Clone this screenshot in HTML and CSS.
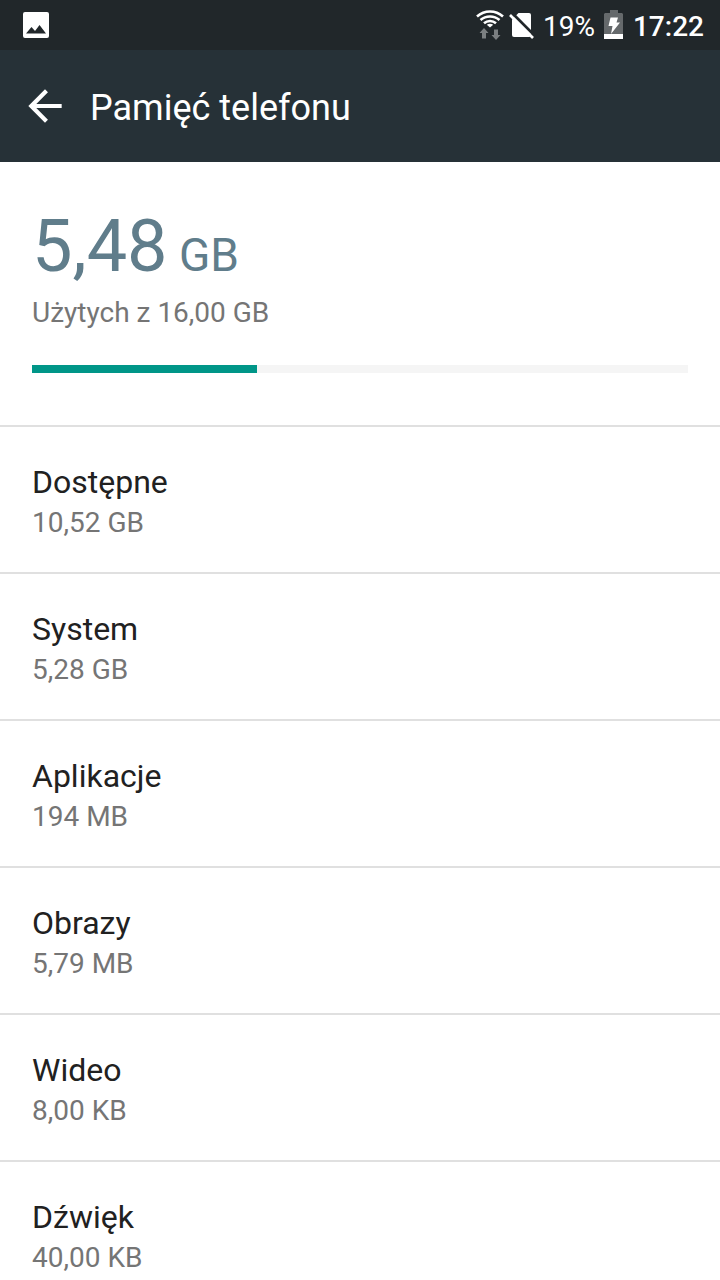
FILE: index.html
```
<!DOCTYPE html>
<html lang="pl">
<head>
	<meta charset="utf-8">
	<meta name="viewport" content="width=device-width, initial-scale=1">
	<title>Pamięć telefonu</title>
	<link rel="stylesheet" href="styles.css">
</head>
<body>
<div class="status-bar">
	<svg class="icon-picture" width="26" height="26" viewBox="0 0 26 26">
		<path fill="#fff" fill-rule="evenodd" d="M2 0h22a2 2 0 0 1 2 2v22a2 2 0 0 1-2 2H2a2 2 0 0 1-2-2V2a2 2 0 0 1 2-2zM3 21.500h20l-6.500-8.500-4.500 6-3.500-4z"/>
	</svg>
	<div class="status-right">
		<svg class="icon-wifi" width="28" height="30" viewBox="0 0 28 30">
			<g fill="none" stroke="#fff" stroke-width="2.600">
				<path d="M1 6.500c7.500-6.700 18.500-6.700 26 0"/>
				<path d="M4.500 10c5.500-4.700 13.500-4.700 19 0"/>
				<path d="M8 13.300c3.500-3 8.500-3 12 0"/>
			</g>
			<path fill="#fff" d="M14 17.500l-3.200-2.700q3.200-2 6.400 0z"/>
			<path fill="#7b7f81" d="M8 18l4.500 5H10v5.500H6V23H3.500zM20 30l-4.500-5H18v-5.500h4V25h2.500z"/>
		</svg>
		<svg class="icon-sim" width="26" height="30" viewBox="0 0 26 30">
			<path fill="#fff" d="M9.500 3H20a2 2 0 0 1 2 2v20a2 2 0 0 1-2 2H5a2 2 0 0 1-2-2V9.500z"/>
			<path stroke="#21272a" stroke-width="3" d="M3 3l24 24"/>
			<path stroke="#fff" stroke-width="2.600" d="M1 5l23 23"/>
		</svg>
		<span class="battery-level">19%</span>
		<svg class="icon-battery" width="20" height="30" viewBox="0 0 20 30">
			<path fill="#65696b" d="M6 0h8v3h4l1 1v20H0V4l1-1h5z"/>
			<path fill="#fff" d="M0 24h19v5H0zM6.500 7.500h7.500l-1.500 5h3.500l-9 11.500 1.500-8H4.500z"/>
		</svg>
		<span class="clock">17:22</span>
	</div>
</div>

<div class="header">
	<button class="back" type="button" aria-label="Wstecz">
		<svg width="50" height="50" viewBox="0 0 24 24">
			<path fill="#fff" d="M20 11H7.830l5.590-5.590L12 4l-8 8 8 8 1.410-1.410L7.830 13H20z"/>
		</svg>
	</button>
	<h1>Pamięć telefonu</h1>
</div>

<div class="content">
	<div class="summary">
		<p class="used">5,48<span class="unit"> GB</span></p>
		<label class="total" for="usage">Użytych z 16,00 GB</label>
		<progress class="usage" id="usage" value="5.48" max="16">5,48 GB</progress>
	</div>
	<ul class="storage-list">
		<li><h2>Dostępne</h2><p>10,52 GB</p></li>
		<li><h2>System</h2><p>5,28 GB</p></li>
		<li><h2>Aplikacje</h2><p>194 MB</p></li>
		<li><h2>Obrazy</h2><p>5,79 MB</p></li>
		<li><h2>Wideo</h2><p>8,00 KB</p></li>
		<li><h2>Dźwięk</h2><p>40,00 KB</p></li>
	</ul>
</div>
</body>
</html>
```
FILE: styles.css
```
body, p, ul, h1, h2 {
	margin: 0
}

ul {
	padding-left: 0;
	list-style: none
}

svg {
	display: block;
	flex: none;
}

body {
	display: flex;
	flex-direction: column;
	height: 100vh;
	background-color: #ffffff;
	color: #212121;
	font-family: Roboto, "Noto Sans", sans-serif;
}

.status-bar {
	flex: none;
	display: flex;
	align-items: center;
	justify-content: space-between;
	height: 50px;
	padding: 0 16px 0 23px;
	background-color: #21272a;
	color: #ffffff;
	font-size: 28px;
	line-height: 32px;
}

.status-right {
	display: flex;
	align-items: center;
}

.icon-sim {
	margin-left: 5px;
}

.battery-level {
	margin-left: 8px;
	padding-top: 4px;
}

.icon-battery {
	margin-left: 9px;
}

.clock {
	margin-left: 9px;
	padding-top: 4px;
	font-weight: 500;
}

.header {
	flex: none;
	display: flex;
	align-items: center;
	height: 112px;
	padding: 0 20px;
	background-color: #263137;
	color: #ffffff;
}

.header h1 {
	margin-left: 20px;
	padding-top: 4px;
	font-size: 36px;
	font-weight: 400;
	line-height: 44px;
}

.back {
	padding: 0;
	border: 0;
	background: none;
	cursor: pointer;
}

.content {
	flex: 1;
	min-height: 0;
	overflow-y: auto;
	scrollbar-width: none;
}

.summary {
	padding: 40px 32px 52px;
}

.used {
	margin-bottom: 2px;
	color: #607d8b;
	font-size: 72px;
	line-height: 90px;
}

.unit {
	font-size: 46px;
	line-height: 46px;
}

.total {
	display: block;
	color: #757575;
	font-size: 28px;
	line-height: 38px;
}

.usage {
	display: block;
	width: 100%;
	height: 8px;
	margin-top: 33px;
	border: 0;
	background-color: #f5f5f5;
	appearance: none;
	-webkit-appearance: none;
}

.usage::-webkit-progress-bar {
	background-color: #f5f5f5;
}

.usage::-webkit-progress-value {
	background-color: #009688;
}

.usage::-moz-progress-bar {
	background-color: #009688;
}

.storage-list li {
	padding: 33px 32px 31px;
	border-top: 2px solid #e0e0e0;
}

.storage-list h2 {
	font-size: 32px;
	font-weight: 400;
	line-height: 45px;
}

.storage-list p {
	color: #757575;
	font-size: 28px;
	line-height: 36px;
}
```
